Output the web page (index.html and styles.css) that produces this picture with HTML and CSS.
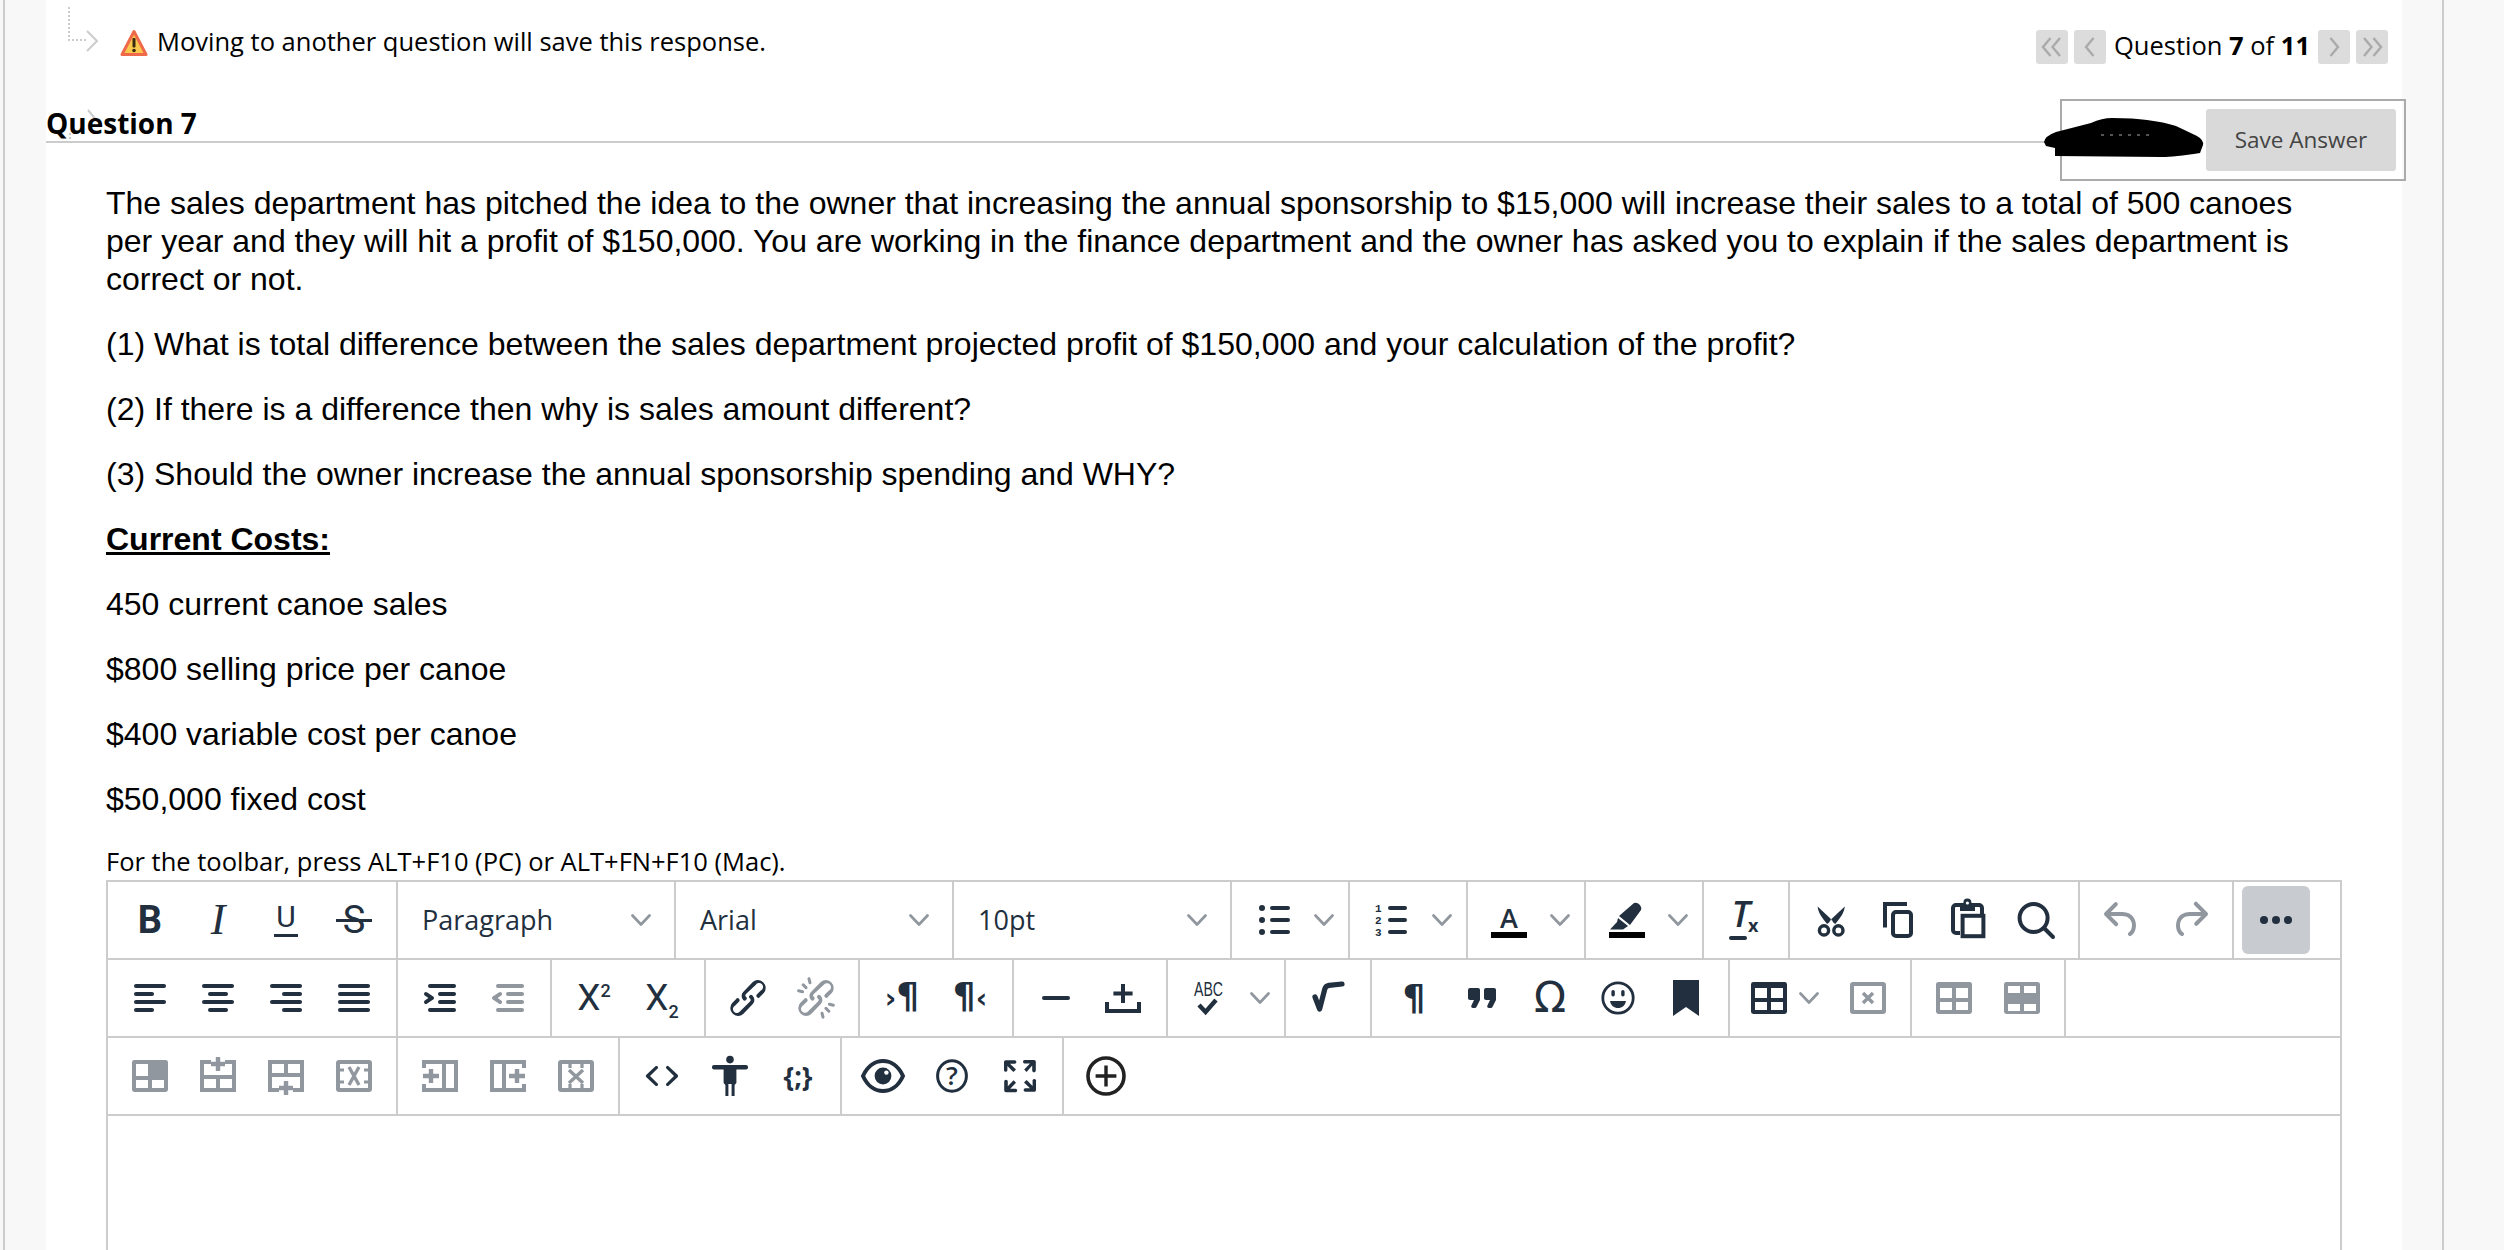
FILE: index.html
```html
<!DOCTYPE html>
<html lang="en">
<head>
  <meta charset="UTF-8" />
  <title>Question 7 of 11</title>
  <link rel="stylesheet" href="styles.css">
</head>
<body>

  <svg class="sprite" xmlns="http://www.w3.org/2000/svg">
    <symbol id="chev" viewBox="0 0 20 12"><path d="M1.500 1.500 10 10.500 18.500 1.500" fill="none" stroke="currentColor" stroke-width="2.700" stroke-linecap="round" stroke-linejoin="round"/></symbol>
    <symbol id="align-left" viewBox="0 0 24 24"><path d="M5 5h14c.6 0 1 .4 1 1s-.4 1-1 1H5a1 1 0 1 1 0-2zm0 4h8c.6 0 1 .4 1 1s-.4 1-1 1H5a1 1 0 1 1 0-2zm0 8h8c.6 0 1 .4 1 1s-.4 1-1 1H5a1 1 0 0 1 0-2zm0-4h14c.6 0 1 .4 1 1s-.4 1-1 1H5a1 1 0 0 1 0-2z"/></symbol>
    <symbol id="align-center" viewBox="0 0 24 24"><path d="M5 5h14c.6 0 1 .4 1 1s-.4 1-1 1H5a1 1 0 1 1 0-2zm3 4h8c.6 0 1 .4 1 1s-.4 1-1 1H8a1 1 0 1 1 0-2zm0 8h8c.6 0 1 .4 1 1s-.4 1-1 1H8a1 1 0 0 1 0-2zm-3-4h14c.6 0 1 .4 1 1s-.4 1-1 1H5a1 1 0 0 1 0-2z"/></symbol>
    <symbol id="align-right" viewBox="0 0 24 24"><path d="M5 5h14c.6 0 1 .4 1 1s-.4 1-1 1H5a1 1 0 1 1 0-2zm6 4h8c.6 0 1 .4 1 1s-.4 1-1 1h-8a1 1 0 0 1 0-2zm0 8h8c.6 0 1 .4 1 1s-.4 1-1 1h-8a1 1 0 0 1 0-2zm-6-4h14c.6 0 1 .4 1 1s-.4 1-1 1H5a1 1 0 0 1 0-2z"/></symbol>
    <symbol id="justify" viewBox="0 0 24 24"><path d="M5 5h14c.6 0 1 .4 1 1s-.4 1-1 1H5a1 1 0 1 1 0-2zm0 4h14c.6 0 1 .4 1 1s-.4 1-1 1H5a1 1 0 1 1 0-2zm0 4h14c.6 0 1 .4 1 1s-.4 1-1 1H5a1 1 0 0 1 0-2zm0 4h14c.6 0 1 .4 1 1s-.4 1-1 1H5a1 1 0 0 1 0-2z"/></symbol>
    <symbol id="indent" viewBox="0 0 24 24"><path d="M7 5h12c.6 0 1 .4 1 1s-.4 1-1 1H7a1 1 0 1 1 0-2zm5 4h7c.6 0 1 .4 1 1s-.4 1-1 1h-7a1 1 0 0 1 0-2zm0 4h7c.6 0 1 .4 1 1s-.4 1-1 1h-7a1 1 0 0 1 0-2zm-5 4h12a1 1 0 0 1 0 2H7a1 1 0 0 1 0-2zm-2.600-3.800L6.200 12l-1.800-1.200a1 1 0 0 1 1.200-1.600l3 2a1 1 0 0 1 0 1.600l-3 2a1 1 0 1 1-1.200-1.600z"/></symbol>
    <symbol id="outdent" viewBox="0 0 24 24"><path d="M7 5h12c.6 0 1 .4 1 1s-.4 1-1 1H7a1 1 0 1 1 0-2zm5 4h7c.6 0 1 .4 1 1s-.4 1-1 1h-7a1 1 0 0 1 0-2zm0 4h7c.6 0 1 .4 1 1s-.4 1-1 1h-7a1 1 0 0 1 0-2zm-5 4h12a1 1 0 0 1 0 2H7a1 1 0 0 1 0-2zm1.600-3.800a1 1 0 0 1-1.200 1.600l-3-2a1 1 0 0 1 0-1.600l3-2a1 1 0 0 1 1.200 1.600L6.800 12l1.800 1.200z"/></symbol>
    <symbol id="link" viewBox="0 0 24 24"><path d="M6.200 12.300a1 1 0 0 1 1.400 1.400l-2 2a2 2 0 1 0 2.600 2.800l4.800-4.800a1 1 0 0 0 0-1.400 1 1 0 1 1 1.400-1.300 2.900 2.900 0 0 1 0 4L9.600 20a3.900 3.900 0 0 1-5.500-5.500l2-2zm11.600-.6a1 1 0 0 1-1.400-1.400l2-2a2 2 0 1 0-2.600-2.800L11 10a1 1 0 0 0 0 1.400A1 1 0 1 1 9.600 13a2.900 2.900 0 0 1 0-4L14.400 4a3.900 3.900 0 0 1 5.500 5.500l-2 2z"/></symbol>
    <symbol id="unlink" viewBox="0 0 24 24"><path d="M6.200 12.300a1 1 0 0 1 1.400 1.400l-2.100 2a2 2 0 1 0 2.700 2.800l4.800-4.800a1 1 0 0 0 0-1.400 1 1 0 1 1 1.400-1.300 2.900 2.900 0 0 1 0 4L9.600 20a3.900 3.900 0 0 1-5.500-5.500l2-2zm11.600-.6a1 1 0 0 1-1.400-1.400l2.100-2a2 2 0 1 0-2.700-2.800L10.900 10a1 1 0 0 0 0 1.400A1 1 0 1 1 9.500 13a2.900 2.900 0 0 1 0-4L14.400 4a3.900 3.900 0 0 1 5.500 5.500l-2 2z"/><path d="M7 6.800 5.600 5.400M9 4.400 8.500 2.400M5.300 8.900 3.300 8.400M17 17.200l1.400 1.400M15 19.600l.5 2M18.700 15.100l2 .5" fill="none" stroke="currentColor" stroke-width="1.500" stroke-linecap="round"/></symbol>
    <symbol id="hr" viewBox="0 0 24 24"><rect x="5" y="11" width="14" height="2" rx="1"/></symbol>
    <symbol id="pagebreak" viewBox="0 0 24 24"><path d="M2.500 14h2v3.500h14V14h2v5.500h-18z"/><path d="M10.500 5h2v3.800h3.800v2h-3.800v3.700h-2v-3.700H6.700v-2h3.800z"/></symbol>
    <symbol id="check" viewBox="0 0 24 24"><path d="M6.500 15.500 9.800 19 15 13" fill="none" stroke="currentColor" stroke-width="2.200"/></symbol>
    <symbol id="sqrt" viewBox="0 0 24 24"><path d="M5.500 11.500 7.800 17.500 10.400 7.500Q10.800 6 12.500 5.700L19 5" fill="none" stroke="currentColor" stroke-width="2.600" stroke-linecap="round" stroke-linejoin="round"/></symbol>
    <symbol id="quote" viewBox="0 0 24 24"><path d="M7.500 17h.9c.4 0 .7-.2.9-.6L11 13V8c0-.6-.4-1-1-1H6a1 1 0 0 0-1 1v4c0 .6.4 1 1 1h2l-1.300 2.700a1 1 0 0 0 .8 1.300zm8 0h.9c.4 0 .7-.2.9-.6L19 13V8c0-.6-.4-1-1-1h-4a1 1 0 0 0-1 1v4c0 .6.4 1 1 1h2l-1.300 2.700a1 1 0 0 0 .8 1.300z"/></symbol>
    <symbol id="emoji" viewBox="0 0 24 24"><circle cx="12" cy="12" r="7.600" fill="none" stroke="currentColor" stroke-width="1.400"/><rect x="8.700" y="8" width="1.700" height="3.200" rx=".85"/><rect x="13.600" y="8" width="1.700" height="3.200" rx=".85"/><path d="M8 13.500h8c-.4 2.200-2 3.500-4 3.500s-3.600-1.300-4-3.500z"/></symbol>
    <symbol id="bookmark" viewBox="0 0 24 24"><path d="M5.500 3h13v18L12 16.500 5.500 21z"/></symbol>
    <symbol id="table" viewBox="0 0 24 24"><rect x="3" y="4" width="18" height="16" rx="1.200"/><path fill="#fff" d="M5 7h6v5H5zM13 7h6v5h-6zM5 14h6v4H5zM13 14h6v4h-6z"/></symbol>
    <symbol id="table-del" viewBox="0 0 24 24"><rect x="4" y="5" width="16" height="14" rx=".6" fill="none" stroke="currentColor" stroke-width="2"/><path d="M9.500 9.500l5 5M14.500 9.500l-5 5" fill="none" stroke="currentColor" stroke-width="1.700"/></symbol>
    <symbol id="table-rows" viewBox="0 0 24 24"><rect x="3" y="4" width="18" height="16" rx="1.200"/><path fill="#fff" d="M5 6h6v3.500H5zM13 6h6v3.500h-6zM5 15h6v3.500H5zM13 15h6v3.500h-6z"/></symbol>
    <symbol id="table-cell" viewBox="0 0 24 24"><rect x="3" y="4" width="18" height="16" rx="1.200"/><path fill="#fff" d="M5 6h6v6H5zM5 14h6v4H5zM13 14h6v4h-6z"/></symbol>
    <symbol id="row-above" viewBox="0 0 24 24"><path d="M8.500 5H4v14h16V5h-4.500M4 12.500h16M12 12.500V19" fill="none" stroke="currentColor" stroke-width="2"/><path d="M12 2.500v7M8.500 6h7" fill="none" stroke="currentColor" stroke-width="2.200"/></symbol>
    <symbol id="row-below" viewBox="0 0 24 24"><path d="M8.500 19H4V5h16v14h-4.500M4 11.500h16M12 5v6.500" fill="none" stroke="currentColor" stroke-width="2"/><path d="M12 14.500v7M8.500 18h7" fill="none" stroke="currentColor" stroke-width="2.200"/></symbol>
    <symbol id="row-del" viewBox="0 0 24 24"><rect x="4" y="5" width="16" height="14" rx=".6" fill="none" stroke="currentColor" stroke-width="2"/><path d="M4 9h3M4 15h3M17 9h3M17 15h3" stroke="currentColor" stroke-width="1.600"/><path d="M9.500 7.500l5 9M14.500 7.500l-5 9" fill="none" stroke="currentColor" stroke-width="1.700"/></symbol>
    <symbol id="col-before" viewBox="0 0 24 24"><path d="M4 8V5h16v14H4v-3M14 5v14" fill="none" stroke="currentColor" stroke-width="2"/><path d="M3.500 12h8M7.500 8.500v7" fill="none" stroke="currentColor" stroke-width="2.200"/></symbol>
    <symbol id="col-after" viewBox="0 0 24 24"><path d="M20 8V5H4v14h16v-3M10 5v14" fill="none" stroke="currentColor" stroke-width="2"/><path d="M12.500 12h8M16.500 8.500v7" fill="none" stroke="currentColor" stroke-width="2.200"/></symbol>
    <symbol id="col-del" viewBox="0 0 24 24"><rect x="4" y="5" width="16" height="14" rx=".6" fill="none" stroke="currentColor" stroke-width="2"/><path d="M9 5v3M15 5v3M9 16v3M15 16v3" stroke="currentColor" stroke-width="1.600"/><path d="M8.500 9l7 6.500M15.500 9l-7 6.500" fill="none" stroke="currentColor" stroke-width="1.700"/></symbol>
    <symbol id="code" viewBox="0 0 24 24"><path d="M9.800 15.700c.3.3.3.800 0 1-.3.400-.9.400-1.200 0l-4.400-4.100a.8.8 0 0 1 0-1.200l4.400-4.200c.3-.3.9-.3 1.200 0 .3.3.3.800 0 1.100L6 12l3.800 3.700zM14.200 15.700c-.3.3-.3.800 0 1 .4.400.9.400 1.200 0l4.400-4.100c.3-.3.3-.9 0-1.200l-4.400-4.200a.8.8 0 0 0-1.200 0c-.3.3-.3.800 0 1.100L18 12l-3.800 3.700z"/></symbol>
    <symbol id="person" viewBox="0 0 24 24"><circle cx="12" cy="3.800" r="1.900"/><rect x="3" y="6.500" width="18" height="2.300" rx="1"/><path d="M8.800 7h6.400v8.500l-.9 1V22h-1.500v-6h-1.600v6H9.700v-5.500l-.9-1z"/></symbol>
    <symbol id="eye" viewBox="0 0 24 24"><path d="M1.500 12C3.800 6.800 7.800 4.500 11.500 4.500S19.200 6.800 21.500 12C19.200 17.200 15.200 19.500 11.500 19.500S3.800 17.200 1.500 12z" fill="none" stroke="currentColor" stroke-width="2"/><circle cx="11.500" cy="12" r="4.200"/><circle cx="13.200" cy="10.300" r="1.100" fill="#fff"/></symbol>
    <symbol id="fullscreen" viewBox="0 0 24 24"><path d="M15.300 10l-1.200-1.300 2.900-3h-2.300a.9.9 0 1 1 0-1.700H19c.5 0 .9.4.9.9v4.400a.9.9 0 1 1-1.800 0V6.800l-2.800 3.200zm0 4l3 3v-2.300a.9.9 0 1 1 1.700 0V19c0 .5-.4.9-.9.900h-4.400a.9.9 0 1 1 0-1.800h2.300l-3-2.900 1.300-1.200zM10 15.400l-2.900 3h2.300a.9.9 0 1 1 0 1.700H5a.9.9 0 0 1-.9-.9v-4.400a.9.9 0 1 1 1.800 0v2.300l2.900-3 1.200 1.300zM8.700 10L5.700 7v2.300a.9.9 0 0 1-1.700 0V5c0-.5.4-.9.9-.9h4.400a.9.9 0 0 1 0 1.800H7l3 2.900-1.300 1.200z"/></symbol>
    <symbol id="plus-circle" viewBox="0 0 24 24"><circle cx="12" cy="12" r="9" fill="none" stroke="#222" stroke-width="1.800"/><path d="M12 6.800v10.400M6.800 12h10.400" fill="none" stroke="#222" stroke-width="1.700"/></symbol>
    <symbol id="ul" viewBox="0 0 24 24"><rect x="10" y="5" width="10" height="2" rx="1"/><rect x="10" y="11" width="10" height="2" rx="1"/><rect x="10" y="17" width="10" height="2" rx="1"/><circle cx="6" cy="6" r="1.500"/><circle cx="6" cy="12" r="1.500"/><circle cx="6" cy="18" r="1.500"/></symbol>
    <symbol id="marker" viewBox="0 0 24 24"><path d="M15 3.500Q16.500 3 18 4.500 19 6 18.500 7L13 14.500 7.500 10zM7 11 12 15 9.500 16.700H3L6.500 13z"/><rect x="2.500" y="18" width="18" height="3" fill="#000"/></symbol>
    <symbol id="cut" viewBox="0 0 24 24"><path d="M4.800 5.200C5 8 7 11 9.600 14L12 12zM18.400 5.200C18.200 8 16.200 11 13.600 14L11.200 12z"/><circle cx="8" cy="17.200" r="2.300" fill="none" stroke="currentColor" stroke-width="1.700"/><circle cx="15.200" cy="17.200" r="2.300" fill="none" stroke="currentColor" stroke-width="1.700"/><circle cx="11.600" cy="12.800" r=".7" fill="#fff"/></symbol>
    <symbol id="copy" viewBox="0 0 24 24"><path d="M15.500 4H4.500V15.800" fill="none" stroke="currentColor" stroke-width="2"/><rect x="8.500" y="8" width="9" height="12" rx="1.500" fill="none" stroke="currentColor" stroke-width="2"/></symbol>
    <symbol id="paste" viewBox="0 0 24 24"><path d="M8 18.500H6a1.500 1.500 0 0 1-1.500-1.500V6A1.500 1.500 0 0 1 6 4.500h11.500A1.500 1.500 0 0 1 19 6v3" fill="none" stroke="currentColor" stroke-width="2"/><path d="M8 3.500h7.500v4H8z"/><circle cx="11.700" cy="3.300" r="2"/><circle cx="11.700" cy="3.500" r=".8" fill="#fff"/><rect x="9.300" y="9.900" width="10.400" height="10.200" fill="#fff" stroke="currentColor" stroke-width="2"/></symbol>
    <symbol id="search" viewBox="0 0 24 24"><circle cx="10.800" cy="11" r="7" fill="none" stroke="currentColor" stroke-width="2"/><path d="M16 16l4.500 4.500" fill="none" stroke="currentColor" stroke-width="2" stroke-linecap="round"/></symbol>
    <symbol id="undo" viewBox="0 0 24 24"><path d="M6.400 8H12c3.700 0 6.200 2 6.800 5.100.6 2.700-.4 5.600-2.300 6.800a1 1 0 0 1-1-1.800c1.100-.6 1.800-2.700 1.400-4.600-.5-2.100-2.100-3.500-4.900-3.500H6.400l3.300 3.300a1 1 0 1 1-1.400 1.400l-5-5a1 1 0 0 1 0-1.400l5-5a1 1 0 0 1 1.400 1.400L6.400 8z"/></symbol>
    <symbol id="redo" viewBox="0 0 24 24"><path d="M17.600 10H12c-2.800 0-4.400 1.400-4.900 3.500-.4 2 .3 4 1.400 4.600a1 1 0 1 1-1 1.800c-2-1.200-2.900-4.100-2.300-6.800.6-3 3-5.100 6.800-5.100h5.600l-3.300-3.300a1 1 0 1 1 1.400-1.400l5 5a1 1 0 0 1 0 1.400l-5 5a1 1 0 0 1-1.400-1.400l3.300-3.300z"/></symbol>
    <symbol id="dots" viewBox="0 0 24 24"><circle cx="6" cy="12" r="2"/><circle cx="12" cy="12" r="2"/><circle cx="18" cy="12" r="2"/></symbol>
  </svg>

  <div class="rail">
    <div class="sheet">

      <svg class="connector" viewBox="0 0 60 145" width="60" height="145">
        <path d="M23 7V40H42M24 133V141" fill="none" stroke="#ccc" stroke-width="2" stroke-dasharray="2 2"/>
        <path d="M41 31 51 41 41 51M42 110 51 121" fill="none" stroke="#ccc" stroke-width="2"/>
      </svg>

      <div class="top-row">
        <div class="warn">
          <svg class="warn-icon" viewBox="0 0 28 28" width="28" height="28">
            <path d="M14 2.500 26 25.500H2z" fill="#fbc84e" stroke="#ee6a4a" stroke-width="3" stroke-linejoin="round"/>
            <rect x="12.500" y="9" width="3" height="9.500" rx="1" fill="#3a2a10"/>
            <circle cx="14" cy="21.500" r="1.800" fill="#3a2a10"/>
          </svg>
          <span>Moving to another question will save this response.</span>
        </div>
        <div class="q-nav">
          <a class="nav-btn">
            <svg viewBox="0 0 24 24" width="24" height="24"><path d="M10.500 3 3 12l7.500 9M20 3l-7.500 9 7.500 9" /></svg>
          </a>
          <a class="nav-btn">
            <svg viewBox="0 0 24 24" width="24" height="24"><path d="M15.500 3 8 12l7.500 9" /></svg>
          </a>
          <span class="q-count">Question <b>7</b> of <b>11</b></span>
          <a class="nav-btn">
            <svg viewBox="0 0 24 24" width="24" height="24"><path d="M8.500 3 16 12l-7.500 9" /></svg>
          </a>
          <a class="nav-btn">
            <svg viewBox="0 0 24 24" width="24" height="24"><path d="M4 3l7.500 9L4 21M13.500 3 21 12l-7.500 9" /></svg>
          </a>
        </div>
      </div>

      <div class="q-head">
        <div class="q-title-line">
          <h2 class="q-title">Question 7</h2>
        </div>
        <div class="save-box">
          <svg class="scribble" viewBox="0 0 160 40" width="160" height="40">
            <path d="M0 24Q1 18 12 14L47 5Q58 0 68 0 90 0 103 2 120 4 132 8L153 18Q160 22 159 27L156 35Q130 39 118 39L11 38V30L2 28z" fill="#000"/>
            <path d="M57 17H110" stroke="#aaa" stroke-width="1" stroke-dasharray="3 6"/>
          </svg>
          <button class="save-btn">Save Answer</button>
        </div>
      </div>

      <div class="q-body">
        <p>The sales department has pitched the idea to the owner that increasing the annual sponsorship to $15,000 will increase their sales to a total of 500 canoes per year and they will hit a profit of $150,000. You are working in the finance department and the owner has asked you to explain if the sales department is correct or not.</p>
        <p>(1) What is total difference between the sales department projected profit of $150,000 and your calculation of the profit?</p>
        <p>(2) If there is a difference then why is sales amount different?</p>
        <p>(3) Should the owner increase the annual sponsorship spending and WHY?</p>
        <p><strong class="underlined">Current Costs:</strong></p>
        <p>450 current canoe sales</p>
        <p>$800 selling price per canoe</p>
        <p>$400 variable cost per canoe</p>
        <p>$50,000 fixed cost</p>
      </div>

      <p class="tb-hint">For the toolbar, press ALT+F10 (PC) or ALT+FN+F10 (Mac).</p>

      <div class="editor">
        <div class="tb-row">
          <div class="tb-group">
            <span class="btn"><span class="g-bold">B</span></span>
            <span class="btn"><span class="g-italic">I</span></span>
            <span class="btn"><span class="g-under">U</span></span>
            <span class="btn"><span class="g-strike">S</span></span>
          </div>
          <div class="select">Paragraph<svg class="chev"><use href="#chev"/></svg></div>
          <div class="select">Arial<svg class="chev"><use href="#chev"/></svg></div>
          <div class="select">10pt<svg class="chev"><use href="#chev"/></svg></div>
          <div class="tb-group">
            <span class="split"><span class="btn"><svg class="ico"><use href="#ul"/></svg></span><svg class="chev"><use href="#chev"/></svg></span>
          </div>
          <div class="tb-group">
            <span class="split">
              <span class="btn">
                <svg class="ico" viewBox="0 0 24 24">
                  <rect x="10" y="5" width="9.500" height="2" rx="1"/><rect x="10" y="11" width="9.500" height="2" rx="1"/><rect x="10" y="17" width="9.500" height="2" rx="1"/>
                  <text class="ico-num" x="3.500" y="8">1</text><text class="ico-num" x="3.500" y="14">2</text><text class="ico-num" x="3.500" y="20">3</text>
                </svg>
              </span><svg class="chev"><use href="#chev"/></svg>
            </span>
          </div>
          <div class="tb-group">
            <span class="split">
              <span class="btn">
                <svg class="ico" viewBox="0 0 24 24">
                  <text class="ico-a" x="11.500" y="16">A</text>
                  <rect x="2.500" y="18" width="18" height="3" fill="#000"/>
                </svg>
              </span><svg class="chev"><use href="#chev"/></svg>
            </span>
          </div>
          <div class="tb-group">
            <span class="split"><span class="btn"><svg class="ico"><use href="#marker"/></svg></span><svg class="chev"><use href="#chev"/></svg></span>
          </div>
          <div class="tb-group">
            <span class="btn"><span class="g-clear">T<span class="g-clear-x">x</span></span></span>
          </div>
          <div class="tb-group">
            <span class="btn"><svg class="ico"><use href="#cut"/></svg></span>
            <span class="btn"><svg class="ico"><use href="#copy"/></svg></span>
            <span class="btn"><svg class="ico"><use href="#paste"/></svg></span>
            <span class="btn"><svg class="ico"><use href="#search"/></svg></span>
          </div>
          <div class="tb-group">
            <span class="btn is-off"><svg class="ico"><use href="#undo"/></svg></span>
            <span class="btn is-off"><svg class="ico"><use href="#redo"/></svg></span>
          </div>
          <div class="tb-group tb-group--last">
            <span class="btn btn--on"><svg class="ico"><use href="#dots"/></svg></span>
          </div>
        </div>

        <div class="tb-row">
          <div class="tb-group">
            <span class="btn"><svg class="ico"><use href="#align-left"/></svg></span>
            <span class="btn"><svg class="ico"><use href="#align-center"/></svg></span>
            <span class="btn"><svg class="ico"><use href="#align-right"/></svg></span>
            <span class="btn"><svg class="ico"><use href="#justify"/></svg></span>
          </div>
          <div class="tb-group">
            <span class="btn"><svg class="ico"><use href="#indent"/></svg></span>
            <span class="btn is-off"><svg class="ico"><use href="#outdent"/></svg></span>
          </div>
          <div class="tb-group">
            <span class="btn"><span class="g-script">X<sup>2</sup></span></span>
            <span class="btn"><span class="g-script">X<sub>2</sub></span></span>
          </div>
          <div class="tb-group">
            <span class="btn"><svg class="ico"><use href="#link"/></svg></span>
            <span class="btn is-off"><svg class="ico"><use href="#unlink"/></svg></span>
          </div>
          <div class="tb-group">
            <span class="btn"><span class="g-pil"><i class="g-pil-arrow">›</i>¶</span></span>
            <span class="btn"><span class="g-pil">¶<i class="g-pil-arrow">‹</i></span></span>
          </div>
          <div class="tb-group">
            <span class="btn"><svg class="ico"><use href="#hr"/></svg></span>
            <span class="btn"><svg class="ico"><use href="#pagebreak"/></svg></span>
          </div>
          <div class="tb-group">
            <span class="split">
              <span class="btn">
                <svg class="ico" viewBox="0 0 24 24">
                  <text class="ico-abc" x="4" y="11" textLength="14.500" lengthAdjust="spacingAndGlyphs">ABC</text>
                  <use href="#check" width="24" height="24"/>
                </svg>
              </span><svg class="chev"><use href="#chev"/></svg>
            </span>
          </div>
          <div class="tb-group">
            <span class="btn"><svg class="ico"><use href="#sqrt"/></svg></span>
          </div>
          <div class="tb-group">
            <span class="btn"><span class="g-pil">¶</span></span>
            <span class="btn"><svg class="ico"><use href="#quote"/></svg></span>
            <span class="btn"><span class="g-omega">Ω</span></span>
            <span class="btn"><svg class="ico"><use href="#emoji"/></svg></span>
            <span class="btn"><svg class="ico"><use href="#bookmark"/></svg></span>
          </div>
          <div class="tb-group">
            <span class="split split--tight"><span class="btn"><svg class="ico"><use href="#table"/></svg></span><svg class="chev"><use href="#chev"/></svg></span>
            <span class="btn is-off"><svg class="ico"><use href="#table-del"/></svg></span>
          </div>
          <div class="tb-group">
            <span class="btn is-off"><svg class="ico"><use href="#table"/></svg></span>
            <span class="btn is-off"><svg class="ico"><use href="#table-rows"/></svg></span>
          </div>
        </div>

        <div class="tb-row">
          <div class="tb-group">
            <span class="btn is-off"><svg class="ico"><use href="#table-cell"/></svg></span>
            <span class="btn is-off"><svg class="ico"><use href="#row-above"/></svg></span>
            <span class="btn is-off"><svg class="ico"><use href="#row-below"/></svg></span>
            <span class="btn is-off"><svg class="ico"><use href="#row-del"/></svg></span>
          </div>
          <div class="tb-group">
            <span class="btn is-off"><svg class="ico"><use href="#col-before"/></svg></span>
            <span class="btn is-off"><svg class="ico"><use href="#col-after"/></svg></span>
            <span class="btn is-off"><svg class="ico"><use href="#col-del"/></svg></span>
          </div>
          <div class="tb-group">
            <span class="btn"><svg class="ico"><use href="#code"/></svg></span>
            <span class="btn"><svg class="ico"><use href="#person"/></svg></span>
            <span class="btn"><span class="g-tpl">{;}</span></span>
          </div>
          <div class="tb-group">
            <span class="btn"><svg class="ico"><use href="#eye"/></svg></span>
            <span class="btn">
              <svg class="ico" viewBox="0 0 24 24">
                <ellipse cx="12" cy="12" rx="7.200" ry="7.600" fill="none" stroke="currentColor" stroke-width="1.500"/>
                <text class="ico-q" x="12" y="16.700">?</text>
              </svg>
            </span>
            <span class="btn"><svg class="ico"><use href="#fullscreen"/></svg></span>
          </div>
          <div class="tb-group tb-group--last">
            <span class="btn"><svg class="ico"><use href="#plus-circle"/></svg></span>
          </div>
        </div>
      </div>

    </div>
  </div>

</body>
</html>
```

FILE: styles.css
```css
* {
  margin: 0;
  padding: 0;
  box-sizing: border-box;
}
html, body {
  height: 1250px;
  overflow: hidden;
}
body {
  background: #f8f8f8;
  font-family: "Open Sans", sans-serif;
  color: #000;
}
.sprite {
  display: none;
}
.rail {
  margin-left: 3px;
  width: 2441px;
  height: 1250px;
  padding: 0 40px 0 41px;
  border-left: 2px solid #ccc;
  border-right: 2px solid #ccc;
}
.sheet {
  position: relative;
  width: 2356px;
  height: 1250px;
  background: #fff;
}
.connector {
  position: absolute;
  left: 0;
  top: 0;
}
.top-row {
  display: flex;
  justify-content: space-between;
  align-items: flex-start;
  height: 64px;
  padding: 30px 14px 0 74px;
}
.warn {
  display: flex;
  align-items: center;
  gap: 9px;
  font-size: 25.5px;
  line-height: 28px;
  margin-top: -3px;
}
.warn-icon {
  position: relative;
  top: 2px;
}
.q-nav {
  display: flex;
  align-items: center;
  gap: 6px;
}
.nav-btn {
  display: flex;
  align-items: center;
  justify-content: center;
  width: 32px;
  height: 34px;
  background: #dcdcdc;
  border-radius: 3px;
}
.nav-btn svg path {
  fill: none;
  stroke: #aaa;
  stroke-width: 2.400;
}
.q-count {
  font-size: 25.5px;
  line-height: 30px;
  margin: -4px 2px 0;
}
.q-head {
  display: flex;
  margin-top: 35px;
  height: 82px;
}
.q-title-line {
  flex: 1;
  height: 44px;
  display: flex;
  align-items: flex-end;
  border-bottom: 2px solid #ccc;
}
.q-title {
  font-size: 28px;
  font-weight: 700;
  line-height: 38px;
  position: relative;
  top: 1px;
}
.save-box {
  position: relative;
  width: 346px;
  margin-right: -4px;
  padding: 8px;
  border: 2px solid #aaa;
  display: flex;
  justify-content: flex-end;
}
.scribble {
  position: absolute;
  left: -18px;
  top: 17px;
}
.save-btn {
  width: 190px;
  height: 62px;
  padding-bottom: 2px;
  border: none;
  border-radius: 3px;
  background: #d9d9d9;
  color: #444;
  font-family: "Open Sans", sans-serif;
  font-size: 22.5px;
}
.q-body {
  margin-top: 3px;
  padding-left: 60px;
  width: 2295px;
  font-family: "Liberation Sans", Arial, sans-serif;
  font-size: 32px;
  line-height: 38px;
}
.q-body p {
  margin-bottom: 27px;
}
.underlined {
  text-decoration: underline;
}
.tb-hint {
  margin: -2px 0 0 60px;
  font-size: 25.5px;
  line-height: 36.500px;
}
.editor {
  margin-left: 60px;
  width: 2236px;
  height: 400px;
  border: 2px solid #ccc;
  color: #222f3e;
  fill: #222f3e;
}
.tb-row {
  display: flex;
  height: 78px;
  border-bottom: 2px solid #ccc;
}
.tb-group {
  display: flex;
  align-items: center;
  padding: 0 8px;
  border-right: 2px solid #ccc;
}
.tb-group--last {
  border-right: none;
}
.btn {
  position: relative;
  display: flex;
  align-items: center;
  justify-content: center;
  width: 68px;
  height: 68px;
  border-radius: 6px;
}
.btn--on {
  background: #c8cbcf;
}
.is-off {
  color: #91979e;
  fill: #91979e;
}
.ico {
  width: 48px;
  height: 48px;
}
.split {
  display: flex;
  align-items: center;
  width: 100px;
}
.chev {
  width: 20px;
  height: 12px;
  margin-left: 6px;
  color: #91979e;
}
.split--tight {
  width: 96px;
}
.split--tight .btn {
  width: 62px;
}
.split--tight .chev {
  margin-left: -1px;
}
.select {
  display: flex;
  align-items: center;
  justify-content: space-between;
  width: 278px;
  padding: 0 23px 0 24px;
  border-right: 2px solid #ccc;
  font-size: 27px;
}
/* letter buttons */
.g-bold {
  font-family: Roboto, sans-serif;
  font-size: 38px;
  font-weight: 700;
}
.g-italic {
  font-family: "Liberation Serif", serif;
  font-size: 44px;
  font-style: italic;
}
.g-under {
  font-family: Roboto, sans-serif;
  font-size: 30px;
  line-height: 30px;
  padding: 0 2px 2px;
  border-bottom: 3px solid #222f3e;
}
.g-strike {
  position: relative;
  font-family: Roboto, sans-serif;
  font-size: 38px;
  line-height: 38px;
}
.g-strike::after {
  content: "";
  position: absolute;
  left: -7px;
  right: -7px;
  top: 18px;
  height: 3px;
  background: #222f3e;
}
.g-script {
  font-family: Roboto, sans-serif;
  font-size: 37px;
  line-height: 37px;
}
.g-script sup, .g-script sub {
  font-size: 18px;
  font-weight: 500;
  line-height: 0;
}
.g-pil {
  font-family: "DejaVu Sans", sans-serif;
  font-size: 36px;
  line-height: 36px;
  font-weight: 700;
}
.g-pil-arrow {
  font-style: normal;
  font-size: 28px;
}
.g-omega {
  font-family: "DejaVu Sans", sans-serif;
  font-size: 42px;
  line-height: 42px;
}
.g-tpl {
  font-family: "Open Sans", sans-serif;
  font-size: 27px;
  font-weight: 700;
}
.g-clear {
  position: relative;
  top: -3px;
  font-family: "Open Sans", sans-serif;
  font-size: 36px;
  line-height: 40px;
  font-style: italic;
  font-weight: 600;
}
.g-clear::after {
  content: "";
  position: absolute;
  left: -3px;
  bottom: 0;
  width: 18px;
  height: 3.500px;
  border-radius: 2px;
  background: #222f3e;
}
.g-clear-x {
  font-size: 18px;
  font-style: normal;
  font-weight: 700;
  position: relative;
  top: 5px;
  left: -2px;
}
/* svg text */
.ico-num {
  font-family: "Liberation Mono", monospace;
  font-size: 5.500px;
  font-weight: 700;
}
.ico-a {
  font-family: "Open Sans", sans-serif;
  font-size: 13.500px;
  font-weight: 600;
  text-anchor: middle;
}
.ico-abc {
  font-family: "Liberation Sans", sans-serif;
  font-size: 10px;
}
.ico-q {
  font-family: "Open Sans", sans-serif;
  font-size: 13px;
  font-weight: 600;
  text-anchor: middle;
}
```
